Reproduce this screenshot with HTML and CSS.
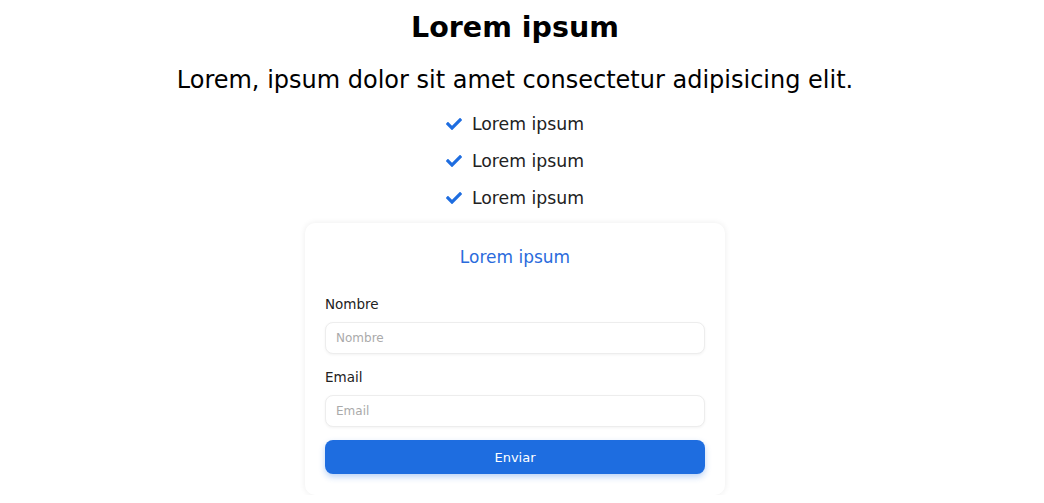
FILE: index.html
```html
<!DOCTYPE html>
<html lang="es">
<head>
<meta charset="utf-8">
<title>Lorem ipsum</title>
<link rel="stylesheet" href="styles.css">
</head>
<body>
<main class="page">
  <h1 class="title">Lorem ipsum</h1>
  <p class="subtitle">Lorem, ipsum dolor sit amet consectetur adipisicing elit.</p>
  <ul class="features">
    <li class="feature"><svg class="check" viewBox="0 0 512 512"><path d="M173.898 439.404l-166.4-166.4c-9.997-9.997-9.997-26.206 0-36.204l36.203-36.204c9.997-9.998 26.207-9.998 36.204 0L192 312.69 432.095 72.596c9.997-9.997 26.207-9.997 36.204 0l36.203 36.204c9.997 9.997 9.997 26.206 0 36.204l-294.4 294.401c-9.998 9.997-26.207 9.997-36.204-.001z"/></svg>Lorem ipsum</li>
    <li class="feature"><svg class="check" viewBox="0 0 512 512"><path d="M173.898 439.404l-166.4-166.4c-9.997-9.997-9.997-26.206 0-36.204l36.203-36.204c9.997-9.998 26.207-9.998 36.204 0L192 312.69 432.095 72.596c9.997-9.997 26.207-9.997 36.204 0l36.203 36.204c9.997 9.997 9.997 26.206 0 36.204l-294.4 294.401c-9.998 9.997-26.207 9.997-36.204-.001z"/></svg>Lorem ipsum</li>
    <li class="feature"><svg class="check" viewBox="0 0 512 512"><path d="M173.898 439.404l-166.4-166.4c-9.997-9.997-9.997-26.206 0-36.204l36.203-36.204c9.997-9.998 26.207-9.998 36.204 0L192 312.69 432.095 72.596c9.997-9.997 26.207-9.997 36.204 0l36.203 36.204c9.997 9.997 9.997 26.206 0 36.204l-294.4 294.401c-9.998 9.997-26.207 9.997-36.204-.001z"/></svg>Lorem ipsum</li>
  </ul>
  <form class="card">
    <h2 class="card-title">Lorem ipsum</h2>
    <label class="label" for="nombre">Nombre</label>
    <input class="input" id="nombre" type="text" placeholder="Nombre">
    <label class="label" for="email">Email</label>
    <input class="input" id="email" type="email" placeholder="Email">
    <button class="button" type="button">Enviar</button>
  </form>
</main>
</body>
</html>
```

FILE: styles.css
```css
* { box-sizing: border-box; }
body {
  margin: 0;
  background: #fff;
  color: #111;
  font-family: "DejaVu Sans", "Open Sans", sans-serif;
}
.page {
  display: flex;
  flex-direction: column;
  align-items: center;
  padding-right: 14px;
}
.title {
  margin: 8px 0 0;
  font-size: 28.5px;
  line-height: 40px;
  font-weight: 700;
  color: #000;
}
.subtitle {
  margin: 17px 0 0;
  font-size: 24px;
  line-height: 30px;
  color: #000;
}
.features {
  list-style: none;
  margin: 10px 0 0;
  padding: 0;
}
.feature {
  display: flex;
  align-items: center;
  height: 37px;
  font-size: 17.3px;
  color: #222;
}
.check {
  width: 16px;
  height: 16px;
  fill: #1e6de0;
  margin-right: 10px;
}
.card {
  margin-top: 7px;
  width: 420px;
  padding: 23px 20px 21px;
  display: flex;
  flex-direction: column;
  border-radius: 10px;
  box-shadow: 0 0 6px rgba(0,0,0,0.08);
  background: #fff;
}
.card-title {
  margin: 0;
  text-align: center;
  font-size: 17px;
  line-height: 22px;
  font-weight: 400;
  color: #2a6bdc;
}
.label {
  margin-top: 27px;
  font-size: 13.5px;
  line-height: 18px;
  color: #222;
}
.label + .input { margin-top: 9px; }
.input + .label { margin-top: 14px; }
.input {
  height: 32px;
  border: 1px solid #ededed;
  border-radius: 8px;
  padding: 0 10px;
  font-family: inherit;
  font-size: 12px;
  box-shadow: 0 1px 3px rgba(0,0,0,0.05);
  outline: none;
}
.input::placeholder { color: #aaa; }
.button {
  margin-top: 13px;
  height: 34px;
  border: none;
  border-radius: 8px;
  background: #1e6de0;
  color: #fff;
  font-family: inherit;
  font-size: 13px;
  box-shadow: 0 3px 6px rgba(30,109,224,0.3);
}
```
